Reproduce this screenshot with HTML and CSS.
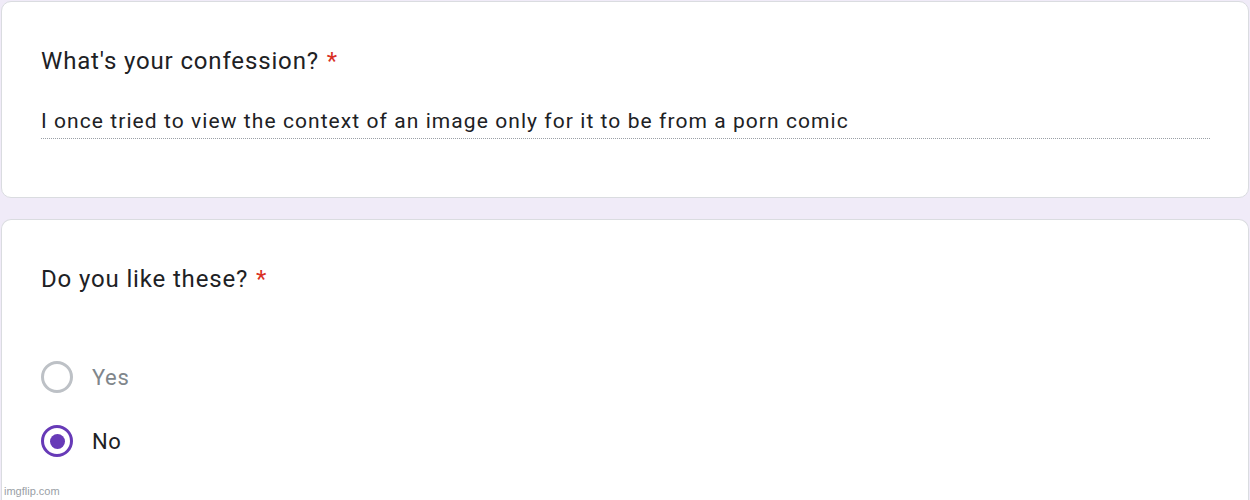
FILE: index.html
```html
<!DOCTYPE html>
<html>
<head>
<meta charset="utf-8">
<link rel="stylesheet" href="styles.css">
</head>
<body>
<div class="page">
  <div class="card card-first">
    <div class="q-title">What's your confession? <span class="req">*</span></div>
    <div class="answer">I once tried to view the context of an image only for it to be from a porn comic</div>
  </div>
  <div class="card card-second">
    <div class="q-title">Do you like these? <span class="req">*</span></div>
    <div class="options">
      <div class="option">
        <span class="radio"></span>
        <span class="opt-label muted">Yes</span>
      </div>
      <div class="option">
        <span class="radio checked"></span>
        <span class="opt-label">No</span>
      </div>
    </div>
  </div>
</div>
<div class="watermark">imgflip.com</div>
</body>
</html>
```
FILE: styles.css
```css
html, body {
  margin: 0;
  padding: 0;
  background: #f0ebf8;
  width: 1250px;
  height: 500px;
  overflow: hidden;
  font-family: Roboto, "Liberation Sans", sans-serif;
}
.page {
  display: flex;
  flex-direction: column;
  gap: 21px;
  padding: 1px 1px 0 1px;
}
.card {
  background: #fff;
  border: 1px solid #dadce0;
  border-radius: 10px;
  padding: 0 39px;
}
.card-first {
  height: 195px;
}
.card-second {
  height: 300px;
  border-bottom: none;
  border-bottom-left-radius: 0;
  border-bottom-right-radius: 0;
}
.q-title {
  font-size: 24px;
  letter-spacing: 0.85px;
  color: #202124;
  line-height: 32px;
}
.card-first .q-title {
  margin-top: 43px;
}
.card-second .q-title {
  margin-top: 43px;
}
.req {
  color: #d93025;
  margin-left: 1px;
}
.answer {
  margin-top: 31px;
  font-size: 21px;
  letter-spacing: 1.07px;
  line-height: 26px;
  color: #202124;
  padding-bottom: 4px;
  border-bottom: 1px dotted #9aa0a6;
  width: 1169px;
}
.options {
  margin-top: 66px;
  display: flex;
  flex-direction: column;
  gap: 32px;
}
.option {
  display: flex;
  align-items: center;
  gap: 19px;
  height: 32px;
}
.radio {
  width: 26px;
  height: 26px;
  border: 3px solid #bdc1c6;
  border-radius: 50%;
  display: flex;
  align-items: center;
  justify-content: center;
  box-sizing: content-box;
}
.radio.checked {
  border-color: #673ab7;
}
.radio.checked::after {
  content: "";
  width: 15px;
  height: 15px;
  border-radius: 50%;
  background: #673ab7;
}
.opt-label {
  font-size: 22px;
  letter-spacing: 0.6px;
  color: #202124;
}
.opt-label.muted {
  color: #80868b;
}
.watermark {
  position: absolute;
  left: 4px;
  top: 485px;
  font-size: 11px;
  color: #9aa0a6;
  font-family: "Liberation Sans", Arial, sans-serif;
}
```
